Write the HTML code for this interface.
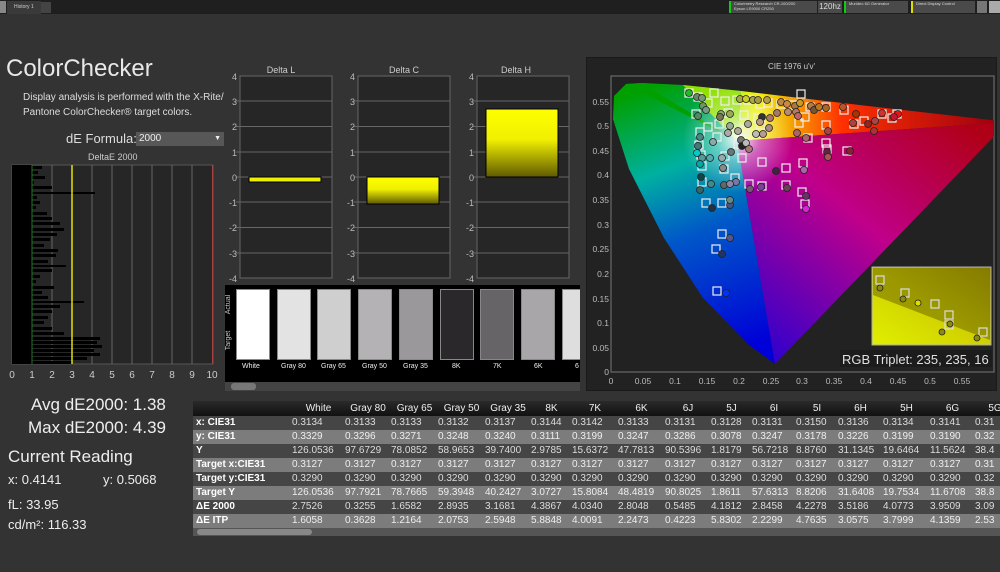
<!DOCTYPE html>
<html><head><meta charset="utf-8"><style>
*{margin:0;padding:0;box-sizing:border-box}
body{width:1000px;height:572px;background:#333;font-family:"Liberation Sans",sans-serif;color:#e6e6e6;position:relative;overflow:hidden}
.a{position:absolute;white-space:nowrap}
.tb{position:absolute;left:0;top:0;width:1000px;height:14px;background:#1f1f1f}
.ctl{position:absolute;top:1px;height:12px;background:#4a4a4a;font-size:4px;color:#ddd;padding-left:3px;line-height:5px}
.tbl{position:absolute;left:193px;top:401px;width:807px;height:135px;background:#2a2a2a;font-size:10px}
.row{display:grid;grid-template-columns:99px 53px 46px 47px 47px 46px 41px 46px 47px 46px 41px 44px 42px 45px 47px 45px 40px;height:14px;line-height:14px;white-space:nowrap;overflow:hidden}
.row div{overflow:hidden}
.row div:first-child{font-weight:bold;padding-left:3px;color:#fff}
.hd{background:linear-gradient(#2a2a2a,#111);height:15px;line-height:15px}
.hd div{text-align:center;color:#eee}
.o{background:#454545;color:#ddd}
.e{background:#7c7c7c;color:#eee}
</style></head><body>
<div class="tb"></div>
<div class="a" style="left:0;top:1px;width:6px;height:12px;background:#888"></div>
<div class="a" style="left:7px;top:1px;width:34px;height:13px;background:#3a3a3a;font-size:5px;line-height:12px;padding-left:7px;color:#ccc">History 1</div>
<div class="a" style="left:41px;top:2px;width:10px;height:11px;background:#444"></div>
<div class="ctl" style="left:729px;width:88px;border-left:2px solid #1c1"> Colorimetry Research CR-100/200<br>Epson LS9000 CR250</div>
<div class="a" style="left:818px;top:1px;width:24px;height:12px;background:#4a4a4a;font-size:8px;line-height:12px;text-align:center;color:#ddd">120hz</div>
<div class="ctl" style="left:844px;width:64px;border-left:2px solid #1c1">Murideo 6G Generator</div>
<div class="ctl" style="left:911px;width:64px;border-left:2px solid #dd0">Direct Display Control</div>
<div class="a" style="left:977px;top:1px;width:10px;height:12px;background:#777"></div>
<div class="a" style="left:989px;top:1px;width:11px;height:12px;background:#aaa"></div>

<div class="a" style="left:6px;top:55px;font-size:24px;color:#e8e8e8">ColorChecker</div>
<div class="a" style="left:23px;top:90px;font-size:10px;line-height:15px;color:#ddd">Display analysis is performed with the X-Rite/<br>Pantone ColorChecker® target colors.</div>
<div class="a" style="left:66px;top:131px;font-size:13px;color:#ddd">dE Formula:</div>
<div class="a" style="left:136px;top:132px;width:88px;height:14px;background:#575757;font-size:10px;line-height:14px;padding-left:3px;color:#eee">2000<span style="position:absolute;right:3px;font-size:7px">▼</span></div>
<div class="a" style="left:88px;top:152px;font-size:9px;color:#ccc">DeltaE 2000</div>

<svg class="a" style="left:0;top:160px" width="225" height="225" viewBox="0 160 225 225">
<rect x="12" y="165" width="201" height="199" fill="#262626" stroke="#555"/>
<g stroke="#666" stroke-width="1">
<line x1="52" y1="165" x2="52" y2="364"/><line x1="92" y1="165" x2="92" y2="364"/><line x1="112" y1="165" x2="112" y2="364"/><line x1="132" y1="165" x2="132" y2="364"/><line x1="152" y1="165" x2="152" y2="364"/><line x1="172" y1="165" x2="172" y2="364"/><line x1="192" y1="165" x2="192" y2="364"/>
</g>
<rect x="12" y="165" width="20" height="199" fill="#000"/>
<g fill="#000">
<rect x="12" y="166" width="30" height="3"/><rect x="12" y="171" width="26" height="3"/><rect x="12" y="176" width="33" height="3"/><rect x="12" y="181" width="22" height="3"/><rect x="12" y="186" width="40" height="3"/><rect x="12" y="192" width="83" height="2"/><rect x="12" y="196" width="25" height="3"/><rect x="12" y="201" width="28" height="3"/><rect x="12" y="206" width="24" height="3"/><rect x="12" y="212" width="35" height="3"/><rect x="12" y="217" width="40" height="3"/><rect x="12" y="222" width="48" height="3"/><rect x="12" y="228" width="52" height="3"/><rect x="12" y="233" width="45" height="3"/><rect x="12" y="238" width="38" height="3"/><rect x="12" y="244" width="32" height="3"/><rect x="12" y="249" width="46" height="3"/><rect x="12" y="254" width="44" height="3"/><rect x="12" y="260" width="36" height="3"/><rect x="12" y="265" width="54" height="2"/><rect x="12" y="269" width="40" height="3"/><rect x="12" y="275" width="28" height="3"/><rect x="12" y="280" width="24" height="3"/><rect x="12" y="286" width="42" height="3"/><rect x="12" y="291" width="30" height="3"/><rect x="12" y="296" width="36" height="3"/><rect x="12" y="301" width="72" height="2"/><rect x="12" y="305" width="48" height="3"/><rect x="12" y="310" width="40" height="3"/><rect x="12" y="316" width="36" height="3"/><rect x="12" y="321" width="32" height="3"/><rect x="12" y="327" width="40" height="3"/><rect x="12" y="332" width="52" height="3"/><rect x="12" y="337" width="88" height="3"/><rect x="12" y="341" width="85" height="3"/><rect x="12" y="345" width="90" height="3"/><rect x="12" y="349" width="82" height="3"/><rect x="12" y="353" width="88" height="3"/><rect x="12" y="357" width="75" height="3"/><rect x="12" y="361" width="60" height="3"/>
</g>
<line x1="32" y1="165" x2="32" y2="364" stroke="#1a7a1a"/>
<line x1="72" y1="165" x2="72" y2="364" stroke="#e0e000" stroke-width="1.5"/>
<line x1="212.5" y1="165" x2="212.5" y2="364" stroke="#a44"/>
<g font-size="10" fill="#ccc" text-anchor="middle" font-family="Liberation Sans">
<text x="12" y="378">0</text><text x="32" y="378">1</text><text x="52" y="378">2</text><text x="72" y="378">3</text><text x="92" y="378">4</text><text x="112" y="378">5</text><text x="132" y="378">6</text><text x="152" y="378">7</text><text x="172" y="378">8</text><text x="192" y="378">9</text><text x="212" y="378">10</text></g>
</svg>

<svg class="a" style="left:225px;top:60px" width="360" height="225" viewBox="225 60 360 225" font-family="Liberation Sans">
<defs>
<linearGradient id="yb" x1="0" y1="0" x2="0" y2="1"><stop offset="0" stop-color="#ff0"/><stop offset=".45" stop-color="#f0f000"/><stop offset="1" stop-color="#605a00"/></linearGradient>
<g id="grid"><rect x="0" y="0" width="92" height="202" fill="#262626" stroke="#666"/>
<g stroke="#666"><line x1="-4" y1="25" x2="92" y2="25"/><line x1="-4" y1="50.5" x2="92" y2="50.5"/><line x1="-4" y1="76" x2="92" y2="76"/><line x1="-4" y1="101" x2="92" y2="101"/><line x1="-4" y1="126" x2="92" y2="126"/><line x1="-4" y1="151.5" x2="92" y2="151.5"/><line x1="-4" y1="177" x2="92" y2="177"/></g>
<g font-size="9" fill="#bbb" text-anchor="end"><text x="-3" y="4">4</text><text x="-3" y="29">3</text><text x="-3" y="54">2</text><text x="-3" y="80">1</text><text x="-3" y="105">0</text><text x="-3" y="130">-1</text><text x="-3" y="155">-2</text><text x="-3" y="181">-3</text><text x="-3" y="206">-4</text></g></g>
</defs>
<use href="#grid" x="240" y="76"/><use href="#grid" x="358" y="76"/><use href="#grid" x="477" y="76"/>
<g font-size="9" fill="#ccc" text-anchor="middle"><text x="281" y="73">Delta L</text><text x="404" y="73">Delta C</text><text x="516" y="73">Delta H</text></g>
<rect x="249" y="177" width="72" height="5" fill="#ee0" stroke="#000"/>
<rect x="367" y="177" width="72" height="27" fill="url(#yb)" stroke="#000"/>
<rect x="486" y="109" width="72" height="68" fill="url(#yb)" stroke="#000"/>
</svg>

<div class="a" style="left:225px;top:285px;width:355px;height:106px;background:#000;overflow:hidden">
<div class="a" style="left:-6px;top:16px;transform:rotate(-90deg);font-size:7px;color:#ccc">Actual</div>
<div class="a" style="left:-6px;top:52px;transform:rotate(-90deg);font-size:7px;color:#ccc">Target</div>
<div class="a" style="left:11px;top:4px;width:34px;height:71px;background:#fff;border:1px solid #888"></div>
<div class="a" style="left:52px;top:4px;width:34px;height:71px;background:#e3e3e3;border:1px solid #888"></div>
<div class="a" style="left:92px;top:4px;width:34px;height:71px;background:#d0cfd0;border:1px solid #888"></div>
<div class="a" style="left:133px;top:4px;width:34px;height:71px;background:#b4b2b4;border:1px solid #888"></div>
<div class="a" style="left:174px;top:4px;width:34px;height:71px;background:#9a989a;border:1px solid #888"></div>
<div class="a" style="left:215px;top:4px;width:34px;height:71px;background:#2a282a;border:1px solid #888"></div>
<div class="a" style="left:255px;top:4px;width:34px;height:71px;background:#666466;border:1px solid #888"></div>
<div class="a" style="left:296px;top:4px;width:34px;height:71px;background:#a8a6a8;border:1px solid #888"></div>
<div class="a" style="left:337px;top:4px;width:34px;height:71px;background:#dedede;border:1px solid #888"></div>
<div style="font-size:7px;color:#eee">
<span class="a" style="left:17px;top:78px">White</span><span class="a" style="left:56px;top:78px">Gray 80</span><span class="a" style="left:96px;top:78px">Gray 65</span><span class="a" style="left:137px;top:78px">Gray 50</span><span class="a" style="left:178px;top:78px">Gray 35</span><span class="a" style="left:227px;top:78px">8K</span><span class="a" style="left:268px;top:78px">7K</span><span class="a" style="left:309px;top:78px">6K</span><span class="a" style="left:350px;top:78px">6</span></div>
<div class="a" style="left:0;top:97px;width:355px;height:9px;background:#444"></div>
<div class="a" style="left:6px;top:98px;width:25px;height:7px;background:#777;border-radius:3px"></div>
</div>

<div class="a" style="left:586px;top:57px;width:411px;height:334px;background:#222;border:1px solid #1a1a1a"></div>
<div class="a" style="left:768px;top:62px;font-size:8px;color:#ccc">CIE 1976 u'v'</div>
<svg class="a" style="left:585px;top:55px" width="415" height="340" viewBox="585 55 415 340" font-family="Liberation Sans">
<defs>
<clipPath id="cp"><rect x="611" y="76" width="383" height="296"/></clipPath>
<linearGradient id="gl" gradientUnits="userSpaceOnUse" x1="640" y1="90" x2="740" y2="350"><stop offset="0" stop-color="#00a000"/><stop offset=".3" stop-color="#00b0a0"/><stop offset=".55" stop-color="#0058c8"/><stop offset="1" stop-color="#0000d8"/></linearGradient>
<linearGradient id="gt" gradientUnits="userSpaceOnUse" x1="690" y1="0" x2="994" y2="0"><stop offset="0" stop-color="#40e000"/><stop offset=".22" stop-color="#f0f000"/><stop offset=".5" stop-color="#ff3000"/><stop offset="1" stop-color="#a00010"/></linearGradient>
<linearGradient id="gp" gradientUnits="userSpaceOnUse" x1="960" y1="120" x2="760" y2="360"><stop offset="0" stop-color="#b00018"/><stop offset=".45" stop-color="#c0008a"/><stop offset="1" stop-color="#2a00d0"/></linearGradient>
<radialGradient id="gw" gradientUnits="userSpaceOnUse" cx="738" cy="138" r="55"><stop offset="0" stop-color="#fff" stop-opacity=".95"/><stop offset=".4" stop-color="#fff" stop-opacity=".4"/><stop offset="1" stop-color="#fff" stop-opacity="0"/></radialGradient>
<linearGradient id="gi" x1="0" y1="1" x2="1" y2="0"><stop offset="0" stop-color="#e0f000"/><stop offset=".5" stop-color="#d0d000"/><stop offset="1" stop-color="#a09000"/></linearGradient>
</defs>
<rect x="611" y="76" width="383" height="296" fill="#222" stroke="#777"/>
<g clip-path="url(#cp)">
<path d="M737,141 L741,91 L683,85 L643,83 L626,84 L614,96 L613,119 L629,169 L664,238 L703,298 L749,345 L775,364 Z" fill="url(#gl)"/>
<path d="M737,141 L741,91 L868,106 L1008,122 Z" fill="url(#gt)"/>
<path d="M737,141 L741,91 L683,85 Z" fill="#90e000"/>
<path d="M737,141 L1008,122 L775,364 Z" fill="url(#gp)"/>
<path d="M737,141 L626,84 L641,83 Z" fill="#00a000"/>
<path d="M741,91 L683,85 L643,83 L626,84 L614,96 L613,119 L629,169 L664,238 L703,298 L749,345 L775,364 L1008,122 L868,106 Z" fill="url(#gw)"/>
</g>
<g fill="none" stroke="#eee" stroke-width="1.2">
<rect x="685" y="89" width="8" height="8"/><rect x="694" y="93" width="8" height="8"/><rect x="692" y="110" width="8" height="8"/><rect x="704" y="99" width="8" height="8"/><rect x="721" y="97" width="8" height="8"/><rect x="733" y="96" width="8" height="8"/><rect x="744" y="96" width="8" height="8"/><rect x="764" y="99" width="8" height="8"/><rect x="777" y="100" width="8" height="8"/><rect x="789" y="101" width="8" height="8"/><rect x="806" y="103" width="8" height="8"/><rect x="822" y="103" width="8" height="8"/><rect x="840" y="106" width="8" height="8"/><rect x="878" y="110" width="8" height="8"/><rect x="893" y="110" width="8" height="8"/><rect x="888" y="114" width="8" height="8"/><rect x="850" y="120" width="8" height="8"/><rect x="860" y="117" width="8" height="8"/><rect x="822" y="121" width="8" height="8"/><rect x="795" y="119" width="8" height="8"/><rect x="801" y="113" width="8" height="8"/><rect x="754" y="114" width="8" height="8"/><rect x="724" y="109" width="8" height="8"/><rect x="740" y="111" width="8" height="8"/><rect x="757" y="121" width="8" height="8"/><rect x="696" y="128" width="8" height="8"/><rect x="695" y="141" width="8" height="8"/><rect x="697" y="151" width="8" height="8"/><rect x="698" y="162" width="8" height="8"/><rect x="721" y="152" width="8" height="8"/><rect x="738" y="154" width="8" height="8"/><rect x="720" y="165" width="8" height="8"/><rect x="731" y="174" width="8" height="8"/><rect x="745" y="180" width="8" height="8"/><rect x="758" y="182" width="8" height="8"/><rect x="782" y="164" width="8" height="8"/><rect x="782" y="181" width="8" height="8"/><rect x="798" y="188" width="8" height="8"/><rect x="801" y="200" width="8" height="8"/><rect x="799" y="159" width="8" height="8"/><rect x="822" y="139" width="8" height="8"/><rect x="823" y="145" width="8" height="8"/><rect x="843" y="147" width="8" height="8"/><rect x="804" y="134" width="8" height="8"/><rect x="710" y="89" width="8" height="8"/><rect x="715" y="120" width="8" height="8"/><rect x="713" y="133" width="8" height="8"/><rect x="741" y="126" width="8" height="8"/><rect x="734" y="140" width="8" height="8"/><rect x="758" y="158" width="8" height="8"/><rect x="702" y="199" width="8" height="8"/><rect x="718" y="199" width="8" height="8"/><rect x="704" y="123" width="8" height="8"/><rect x="698" y="178" width="8" height="8"/><rect x="718" y="230" width="8" height="8"/><rect x="712" y="245" width="8" height="8"/><rect x="713" y="287" width="8" height="8"/><rect x="797" y="90" width="8" height="8"/><rect x="756" y="100" width="8" height="8"/></g>
<g stroke="#222" stroke-width=".8">
<circle cx="689" cy="93" r="3.5" fill="#2b2"/><circle cx="697" cy="97" r="3.5" fill="#686"/><circle cx="702" cy="98" r="3.5" fill="#797"/><circle cx="703" cy="106" r="3.5" fill="#696"/><circle cx="698" cy="116" r="3.5" fill="#586"/><circle cx="706" cy="110" r="3.5" fill="#798"/><circle cx="721" cy="114" r="3.5" fill="#8a6"/><circle cx="730" cy="114" r="3.5" fill="#9a5"/><circle cx="740" cy="99" r="3.5" fill="#aa4"/><circle cx="746" cy="99" r="3.5" fill="#cc2"/><circle cx="753" cy="100" r="3.5" fill="#aa4"/><circle cx="758" cy="100" r="3.5" fill="#a94"/><circle cx="767" cy="100" r="3.5" fill="#b94"/><circle cx="781" cy="102" r="3.5" fill="#b84"/><circle cx="787" cy="104" r="3.5" fill="#c84"/><circle cx="795" cy="106" r="3.5" fill="#a74"/><circle cx="800" cy="103" r="3.5" fill="#c92"/><circle cx="811" cy="106" r="3.5" fill="#b74"/><circle cx="814" cy="110" r="3.5" fill="#753"/><circle cx="796" cy="112" r="3.5" fill="#b76"/><circle cx="788" cy="112" r="3.5" fill="#b87"/><circle cx="777" cy="113" r="3.5" fill="#a76"/><circle cx="770" cy="118" r="3.5" fill="#a76"/><circle cx="762" cy="117" r="3.5" fill="#333"/><circle cx="760" cy="122" r="3.5" fill="#b98"/><circle cx="748" cy="124" r="3.5" fill="#aa9"/><circle cx="738" cy="131" r="3.5" fill="#aa9"/><circle cx="730" cy="126" r="3.5" fill="#9a9"/><circle cx="728" cy="133" r="3.5" fill="#aaa"/><circle cx="741" cy="140" r="3.5" fill="#777"/><circle cx="742" cy="146" r="3.5" fill="#222"/><circle cx="746" cy="143" r="3.5" fill="#bbb"/><circle cx="756" cy="134" r="3.5" fill="#bbb"/><circle cx="763" cy="134" r="3.5" fill="#b99"/><circle cx="797" cy="133" r="3.5" fill="#a66"/><circle cx="806" cy="138" r="3.5" fill="#a66"/><circle cx="819" cy="107" r="3.5" fill="#b72"/><circle cx="826" cy="108" r="3.5" fill="#a62"/><circle cx="843" cy="107" r="3.5" fill="#b52"/><circle cx="856" cy="114" r="3.5" fill="#a30"/><circle cx="882" cy="113" r="3.5" fill="#c33"/><circle cx="898" cy="114" r="3.5" fill="#e11"/><circle cx="894" cy="117" r="3.5" fill="#c13"/><circle cx="853" cy="123" r="3.5" fill="#a44"/><circle cx="868" cy="124" r="3.5" fill="#922"/><circle cx="875" cy="121" r="3.5" fill="#a44"/><circle cx="874" cy="131" r="3.5" fill="#a33"/><circle cx="828" cy="131" r="3.5" fill="#a44"/><circle cx="798" cy="116" r="3.5" fill="#b66"/><circle cx="769" cy="128" r="3.5" fill="#a88"/><circle cx="749" cy="149" r="3.5" fill="#a77"/><circle cx="731" cy="152" r="3.5" fill="#677"/><circle cx="722" cy="158" r="3.5" fill="#9aa"/><circle cx="713" cy="142" r="3.5" fill="#8aa"/><circle cx="700" cy="137" r="3.5" fill="#488"/><circle cx="698" cy="146" r="3.5" fill="#477"/><circle cx="697" cy="153" r="3.5" fill="#0cc"/><circle cx="702" cy="158" r="3.5" fill="#599"/><circle cx="700" cy="164" r="3.5" fill="#0aa"/><circle cx="701" cy="177" r="3.5" fill="#144"/><circle cx="710" cy="158" r="3.5" fill="#5aa"/><circle cx="723" cy="168" r="3.5" fill="#888"/><circle cx="724" cy="185" r="3.5" fill="#666"/><circle cx="736" cy="182" r="3.5" fill="#77a"/><circle cx="750" cy="189" r="3.5" fill="#757"/><circle cx="761" cy="187" r="3.5" fill="#749"/><circle cx="806" cy="196" r="3.5" fill="#636"/><circle cx="806" cy="209" r="3.5" fill="#d2d"/><circle cx="804" cy="170" r="3.5" fill="#a6a"/><circle cx="827" cy="152" r="3.5" fill="#624"/><circle cx="828" cy="157" r="3.5" fill="#a55"/><circle cx="850" cy="151" r="3.5" fill="#823"/><circle cx="776" cy="171" r="3.5" fill="#424"/><circle cx="787" cy="188" r="3.5" fill="#645"/><circle cx="700" cy="190" r="3.5" fill="#366"/><circle cx="711" cy="184" r="3.5" fill="#488"/><circle cx="730" cy="184" r="3.5" fill="#88a"/><circle cx="730" cy="205" r="3.5" fill="#458"/><circle cx="712" cy="208" r="3.5" fill="#234"/><circle cx="730" cy="238" r="3.5" fill="#558"/><circle cx="722" cy="254" r="3.5" fill="#236"/><circle cx="726" cy="293" r="3.5" fill="#03f"/><circle cx="730" cy="200" r="3.5" fill="#688"/><circle cx="720" cy="117" r="3.5" fill="#775"/></g>
<rect x="872" y="267" width="119" height="78" fill="url(#gi)" stroke="#aaa"/>
<path d="M873,295 L990,340 L990,268 L873,268 Z" fill="#706a00" opacity=".55"/>
<g fill="none" stroke="#ddd" stroke-width="1.2"><rect x="876" y="276" width="8" height="8"/><rect x="901" y="289" width="8" height="8"/><rect x="931" y="300" width="8" height="8"/><rect x="945" y="311" width="8" height="8"/><rect x="945" y="321" width="8" height="8"/><rect x="979" y="328" width="8" height="8"/></g>
<g stroke="#222" stroke-width=".8" fill="#8a8a10"><circle cx="880" cy="288" r="3"/><circle cx="903" cy="299" r="3"/><circle cx="918" cy="303" r="3" fill="#dd0"/><circle cx="950" cy="324" r="3"/><circle cx="942" cy="332" r="3"/><circle cx="977" cy="338" r="3"/></g>
<rect x="840" y="350" width="152" height="17" fill="#1c1c1c"/>
<text x="842" y="364" font-size="13" fill="#e0e0e0">RGB Triplet: 235, 235, 16</text>
<g font-size="8.5" fill="#bbb" text-anchor="end">
<text x="609" y="105">0.55</text><text x="609" y="129">0.5</text><text x="609" y="154">0.45</text><text x="609" y="178">0.4</text><text x="609" y="203">0.35</text><text x="609" y="228">0.3</text><text x="609" y="252">0.25</text><text x="609" y="277">0.2</text><text x="609" y="302">0.15</text><text x="609" y="326">0.1</text><text x="609" y="351">0.05</text><text x="609" y="375">0</text></g>
<g font-size="8.5" fill="#bbb" text-anchor="middle">
<text x="611" y="384">0</text><text x="643" y="384">0.05</text><text x="675" y="384">0.1</text><text x="707" y="384">0.15</text><text x="739" y="384">0.2</text><text x="771" y="384">0.25</text><text x="802" y="384">0.3</text><text x="834" y="384">0.35</text><text x="866" y="384">0.4</text><text x="898" y="384">0.45</text><text x="930" y="384">0.5</text><text x="962" y="384">0.55</text></g>
</svg>

<div class="a" style="left:31px;top:395px;font-size:17px;color:#eee">Avg dE2000: 1.38</div>
<div class="a" style="left:28px;top:418px;font-size:17px;color:#eee">Max dE2000: 4.39</div>
<div class="a" style="left:8px;top:447px;font-size:17px;color:#eee">Current Reading</div>
<div class="a" style="left:8px;top:472px;font-size:13px;color:#eee">x: 0.4141</div>
<div class="a" style="left:103px;top:472px;font-size:13px;color:#eee">y: 0.5068</div>
<div class="a" style="left:8px;top:497px;font-size:13px;color:#eee">fL: 33.95</div>
<div class="a" style="left:8px;top:517px;font-size:13px;color:#eee">cd/m²: 116.33</div>

<div class="tbl">
<div class="row hd"><div></div><div>White</div><div>Gray 80</div><div>Gray 65</div><div>Gray 50</div><div>Gray 35</div><div>8K</div><div>7K</div><div>6K</div><div>6J</div><div>5J</div><div>6I</div><div>5I</div><div>6H</div><div>5H</div><div>6G</div><div>5G</div></div>
<div class="row o"><div>x: CIE31</div><div>0.3134</div><div>0.3133</div><div>0.3133</div><div>0.3132</div><div>0.3137</div><div>0.3144</div><div>0.3142</div><div>0.3133</div><div>0.3131</div><div>0.3128</div><div>0.3131</div><div>0.3150</div><div>0.3136</div><div>0.3134</div><div>0.3141</div><div>0.31</div></div>
<div class="row e"><div>y: CIE31</div><div>0.3329</div><div>0.3296</div><div>0.3271</div><div>0.3248</div><div>0.3240</div><div>0.3111</div><div>0.3199</div><div>0.3247</div><div>0.3286</div><div>0.3078</div><div>0.3247</div><div>0.3178</div><div>0.3226</div><div>0.3199</div><div>0.3190</div><div>0.32</div></div>
<div class="row o"><div>Y</div><div>126.0536</div><div>97.6729</div><div>78.0852</div><div>58.9653</div><div>39.7400</div><div>2.9785</div><div>15.6372</div><div>47.7813</div><div>90.5396</div><div>1.8179</div><div>56.7218</div><div>8.8760</div><div>31.1345</div><div>19.6464</div><div>11.5624</div><div>38.4</div></div>
<div class="row e"><div>Target x:CIE31</div><div>0.3127</div><div>0.3127</div><div>0.3127</div><div>0.3127</div><div>0.3127</div><div>0.3127</div><div>0.3127</div><div>0.3127</div><div>0.3127</div><div>0.3127</div><div>0.3127</div><div>0.3127</div><div>0.3127</div><div>0.3127</div><div>0.3127</div><div>0.31</div></div>
<div class="row o"><div>Target y:CIE31</div><div>0.3290</div><div>0.3290</div><div>0.3290</div><div>0.3290</div><div>0.3290</div><div>0.3290</div><div>0.3290</div><div>0.3290</div><div>0.3290</div><div>0.3290</div><div>0.3290</div><div>0.3290</div><div>0.3290</div><div>0.3290</div><div>0.3290</div><div>0.32</div></div>
<div class="row e"><div>Target Y</div><div>126.0536</div><div>97.7921</div><div>78.7665</div><div>59.3948</div><div>40.2427</div><div>3.0727</div><div>15.8084</div><div>48.4819</div><div>90.8025</div><div>1.8611</div><div>57.6313</div><div>8.8206</div><div>31.6408</div><div>19.7534</div><div>11.6708</div><div>38.8</div></div>
<div class="row o"><div>ΔE 2000</div><div>2.7526</div><div>0.3255</div><div>1.6582</div><div>2.8935</div><div>3.1681</div><div>4.3867</div><div>4.0340</div><div>2.8048</div><div>0.5485</div><div>4.1812</div><div>2.8458</div><div>4.2278</div><div>3.5186</div><div>4.0773</div><div>3.9509</div><div>3.09</div></div>
<div class="row e"><div>ΔE ITP</div><div>1.6058</div><div>0.3628</div><div>1.2164</div><div>2.0753</div><div>2.5948</div><div>5.8848</div><div>4.0091</div><div>2.2473</div><div>0.4223</div><div>5.8302</div><div>2.2299</div><div>4.7635</div><div>3.0575</div><div>3.7999</div><div>4.1359</div><div>2.53</div></div>
<div style="height:8px;background:#555;position:relative"><div class="a" style="left:4px;top:1px;width:115px;height:6px;background:#888;border-radius:3px"></div></div>
</div>
</body></html>
